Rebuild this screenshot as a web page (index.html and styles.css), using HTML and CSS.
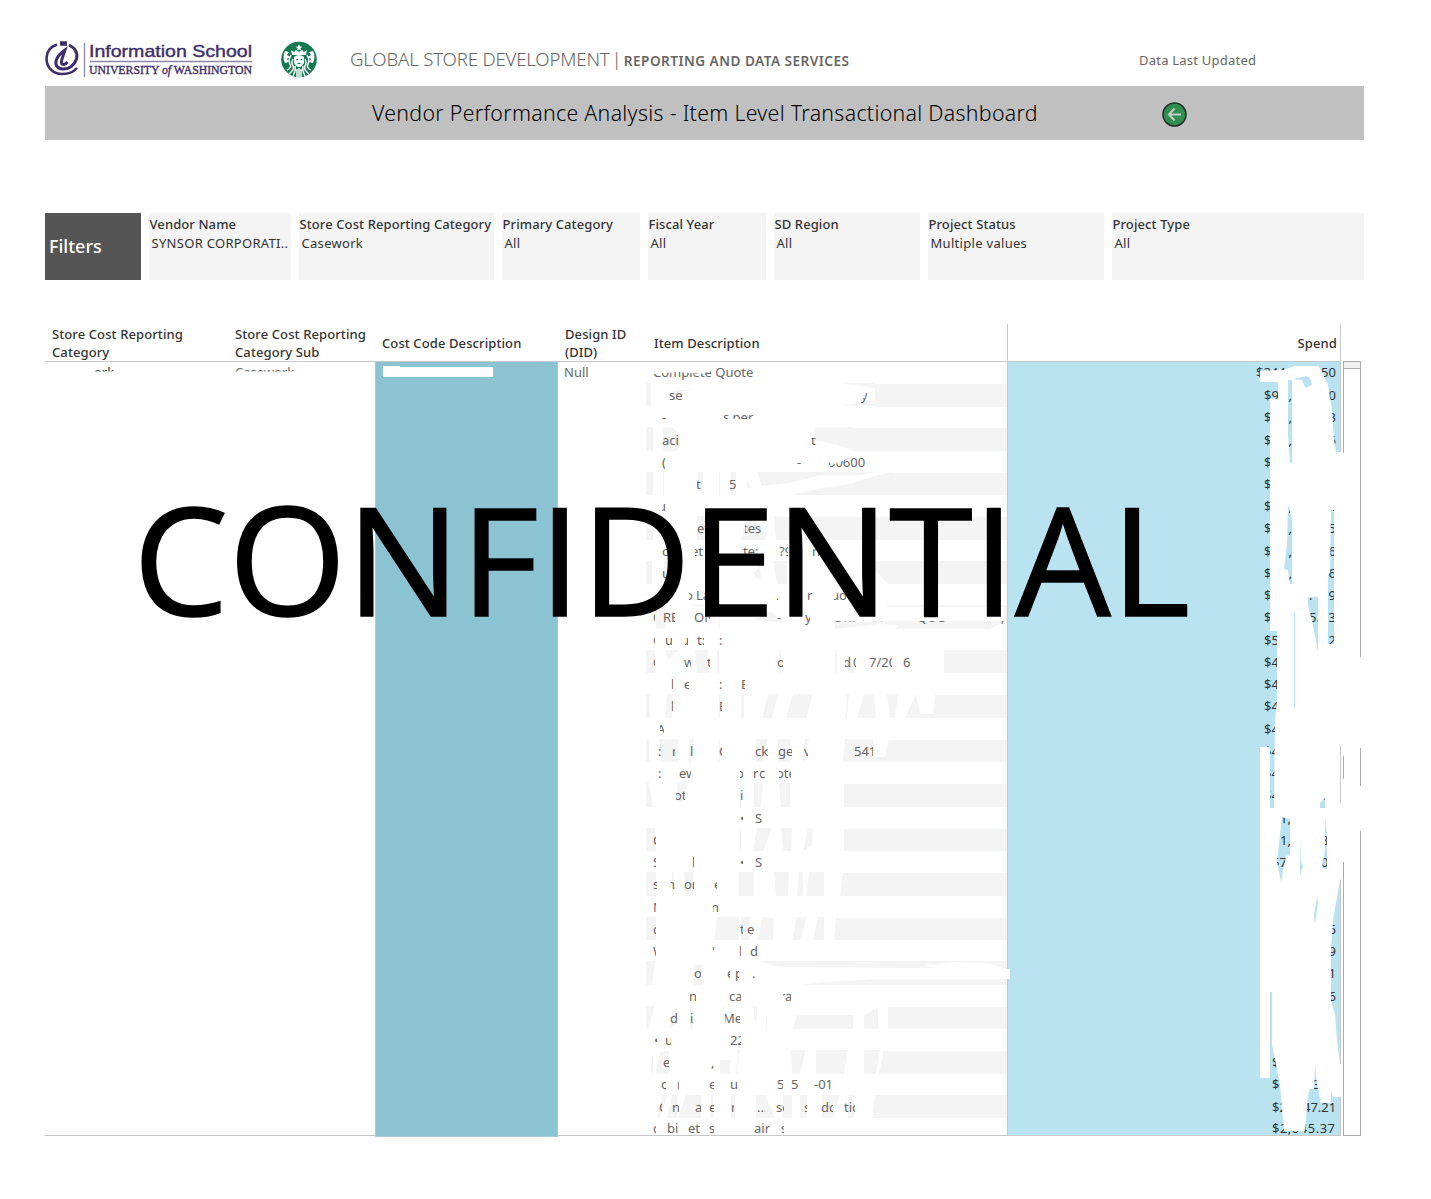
FILE: index.html
```html
<!DOCTYPE html>
<html lang="en">
<head>
<meta charset="utf-8">
<title>Vendor Performance Analysis</title>
<link rel="stylesheet" href="styles.css">
</head>
<body>
<main class="page">
  <header class="top">
    <svg class="ischool" width="208" height="38" viewBox="0 0 208 38">
      <g fill="none" stroke="#3d2f6b">
        <path d="M12 4.500C5 7 1.500 12 1.500 18.500C1.500 27.500 8 34 17 34C23.500 34 29 31.500 32 28" stroke-width="2.600"/>
        <path d="M24 5C30 8 33 13 31.500 19C29.500 25.500 24 29 18.500 29C12 29 9.500 24.500 11.500 19.500C13 15.500 16.500 12.500 20 10C18.500 15 16 20 16.500 23C17 25.500 20.500 24.500 22.500 22" stroke-width="3"/>
        <path d="M15 3.500h7" stroke-width="4.500"/>
        <path d="M39.500 3v34M45 21.500h162" stroke="#8d86aa" stroke-width="1.300"/>
      </g>
      <text class="ischool-name" x="44" y="16.500" textLength="163" lengthAdjust="spacingAndGlyphs">Information School</text>
      <text class="ischool-univ" x="44" y="34" textLength="163" lengthAdjust="spacingAndGlyphs">UNIVERSITY <tspan font-style="italic">of</tspan> WASHINGTON</text>
    </svg>
    <svg class="siren" width="36" height="37" viewBox="0 0 36 37">
      <circle cx="18" cy="18.500" r="17.800" fill="#137a50"/>
      <g fill="#fff">
        <path d="M18 3l1 2.500 2.500.2-2 1.600.6 2.400-2.100-1.300-2.100 1.300.6-2.400-2-1.600 2.500-.2z"/>
        <path d="M10 9l3 2 2-2 3 2 3-2 2 2 3-2-1 5H11z"/>
        <path d="M13 16q5-4 10 0v6q-2 4-5 4t-5-4z"/>
        <path d="M4 10l4 1-2 3 3 2-3 2 2 3-4 1q-3-6 0-12zM32 10l-4 1 2 3-3 2 3 2-2 3 4 1q3-6 0-12z"/>
      </g>
      <g fill="none" stroke="#fff" stroke-width="1.500">
        <path d="M10 14q-3 5-1 9t-3 6M12 18q-2 4 0 7t-4 8M14 25q1 4-2 10M26 14q3 5 1 9t3 6M24 18q2 4 0 7t4 8M22 25q-1 4 2 10M18 27v9M16 28v8M20 28v8"/>
      </g>
      <path d="M15 18.500h2M19.500 18.500h2M16.500 22.500h3" stroke="#137a50"/>
    </svg>
    <div class="dept"><span class="dept-main">GLOBAL STORE DEVELOPMENT</span><span class="bar">|</span><span class="dept-sub">REPORTING AND DATA SERVICES</span></div>
    <div class="updated">Data Last Updated</div>
  </header>

  <section class="title">
    <h1>Vendor Performance Analysis - Item Level Transactional Dashboard</h1>
    <svg class="back" width="26" height="26" viewBox="0 0 26 26">
      <circle cx="12.500" cy="12.500" r="11.500" fill="#2f8f50" stroke="#233128" stroke-width="1.600"/>
      <path d="M19 12.500H7.500M12.500 6.500l-5.500 6 5.500 6" fill="none" stroke="#c4cfc6" stroke-width="2"/>
    </svg>
  </section>

  <section class="filters">
    <div class="filters-label">Filters</div>
    <div class="filter"><b>Vendor Name</b><span>SYNSOR CORPORATI..</span></div>
    <div class="filter"><b>Store Cost Reporting Category</b><span>Casework</span></div>
    <div class="filter"><b>Primary Category</b><span>All</span></div>
    <div class="filter"><b>Fiscal Year</b><span>All</span></div>
    <div class="filter"><b>SD Region</b><span>All</span></div>
    <div class="filter"><b>Project Status</b><span>Multiple values</span></div>
    <div class="filter"><b>Project Type</b><span>All</span></div>
  </section>

  <section class="sheet">
    <div class="head">
      <div>Store Cost Reporting<br>Category</div>
      <div>Store Cost Reporting<br>Category Sub</div>
      <div>Cost Code Description</div>
      <div>Design ID<br>(DID)</div>
      <div>Item Description</div>
      <div class="spend-head">Spend</div>
    </div>
    <div class="body">
      <div class="cell cat"><span>ork</span></div>
      <div class="cell sub"><span>Casework</span></div>
      <div class="cell code"></div>
      <div class="cell did">Null</div>
      <div class="items"></div>
      <div class="spend"></div>
      <div class="scroll"><i></i></div>
    </div>
  </section>
</main>
<svg class="redaction bands" width="1431" height="1199"></svg>
<div class="fragments"></div>
<svg class="redaction" width="1431" height="1199">
  <g fill="#fff">
    <path d="M46 371.500H370V390H46zM383 366h17v1h93v10H383zM653 364H708L712 371L700 374L680 372L653 374z"/>
    <path d="M680 419H760V425H680zM690 428L740 424H815V438H690zM780 465L820 459L835 464L850 458L874 458L880 463V456H800zM790 440V444H812V440zM800 465h30v5h-30zM655 408h14v7h-14zM855 388h10v10h-10z"/>
    <path d="M833 607H1004V621H895L870 622L833 621z"/>
    <path d="M1005 969h5v10h-5z"/>
    <path d="M1336 453h8V756h-3V745h-5zM1342 779h4V862h-4zM1357 657h6V748h-6zM1357 786h6V831h-6z"/>
    <path fill-rule="evenodd" d="M1260 371L1283 370L1295 366H1318L1321 370L1328 385L1332 410L1334 440L1336 452H1342V745H1340V803H1342V878L1340 880L1333 920L1331 950V1000L1335 1015L1337 1040L1340 1064H1342V1097H1333L1331 1092V1103H1321L1317 1085L1315 1065L1314 1089H1310L1308 1095L1305 1131H1284L1280 1085L1272 1044V992H1270V1078H1260V747H1270V808H1274L1275 720L1277 700V631H1270V399H1278V382H1260z
      M1288 380H1292V464L1290 462L1288 435zM1293 379L1306 376L1310 378L1312 385L1305 388L1302 380z
      M1288 504L1292 520V584L1290 584L1288 570L1284 569L1287 545zM1331 510L1334 510V644H1328V575L1330 573z
      M1308 597H1318V652L1312 620L1308 605zM1294 612H1295V708H1294zM1320 803L1325 798V808H1320z
      M1282 817L1290 819V855L1286 856L1281 882L1277 862zM1300 839L1301 862L1303 866L1300 876z
      M1325 818L1327 835V869L1322 868L1325 850zM1317 896L1318 903L1315 924L1314 915z"/>
  </g>
  <text class="stamp" x="133" y="615.500" textLength="1057" lengthAdjust="spacingAndGlyphs">CONFIDENTIAL</text>
</svg>
<script src="rows.js"></script>
</body>
</html>
```
FILE: styles.css
```css
* { box-sizing: border-box; }
body {
  margin: 0;
  width: 1431px;
  height: 1199px;
  position: relative;
  overflow: hidden;
  background: #fff;
  color: #333;
  font: 13px/18px "Noto Sans", sans-serif;
}
.page { padding: 40px 67px 0 45px; }
.top { display: flex; height: 46px; }
.ischool-name { font: 17px "Liberation Sans", sans-serif; fill: #3d2f6b; stroke: #3d2f6b; stroke-width: .4px; }
.ischool-univ { font: 13px "Liberation Serif", serif; fill: #3d2f6b; stroke: #3d2f6b; stroke-width: .4px; }
.siren { margin: 1px 0 0 28px; }
.dept { margin-left: 33px; width: 789px; color: #666; white-space: nowrap; line-height: 38px; }
.dept-main { font-size: 18.600px; font-weight: 300; letter-spacing: -.17px; }
.bar { font-size: 19px; font-weight: 300; margin: 0 2px 0 2px; }
.dept-sub { font-size: 13.600px; font-weight: 600; letter-spacing: .47px; }
.updated { color: #666; line-height: 41px; letter-spacing: .23px; white-space: nowrap; }

.title { height: 54px; background: #c0c0c0; display: flex; align-items: center; }
h1 { margin: 0 0 0 327px; width: 790px; font-size: 21.300px; font-weight: 300; color: #000; white-space: nowrap; letter-spacing: .31px; }
.back { margin-top: 3px; }

.filters {
  margin-top: 73px;
  height: 67px;
  display: grid;
  grid-template-columns: 96px 142px 195px 138px 118px 146px 176px 252px;
  column-gap: 8px;
}
.filters-label { background: #555; color: #fff; font-size: 18px; font-weight: 500; line-height: 66px; padding-left: 4px; }
.filter { background: #f4f4f4; padding: 2px 0 0 .5px; white-space: nowrap; display: flex; flex-direction: column; line-height: 19px; }
.filter b, .head { font-weight: 500; letter-spacing: .1px; }
.filter span { padding-left: 2px; letter-spacing: .3px; }

.sheet { margin-top: 44px; width: 1316px; }
.head, .body { display: grid; grid-template-columns: 183px 147px 183px 89px 360px 334px 20px; }
.head {
  height: 38px;
  width: 1296px;
  align-items: center;
  border-bottom: 1px solid #c8c8c8;
  border-right: 1px solid #c8c8c8;
  white-space: nowrap;
}
.head div { padding-left: 7px; }
.head .spend-head { height: 37px; line-height: 39px; border-left: 1px solid #c8c8c8; text-align: right; padding-right: 4px; }
.body { height: 774px; }
.cell { border-bottom: 1px solid #c8c8c8; padding: 1px 0 0 7px; color: #666; }
.cat { color: #333; padding-left: 49px; }
.code { background: #8bc3d3; border: 1px solid #a9cbd5; border-top: 0; margin-bottom: -1px; }
.did { padding-left: 6px; }
.items { margin-left: -1px; border-bottom: 1px solid #c8c8c8; background: repeating-linear-gradient(#fff 0 21.500px, #f4f4f4 21.500px 44.500px); }
.spend { background: #b9e3f0; border: 1px solid #c8c8c8; border-top: 0; }
.scroll { margin-left: 2px; border: 1px solid #acacac; width: 18px; height: 775px; margin-top: -1px; }
.scroll i { display: block; height: 7px; background: #eee; border-bottom: 1px solid #acacac; }

.redaction, .fragments { position: absolute; left: 0; top: 0; }
.row { position: absolute; left: 0; height: 18px; width: 1431px; }
.row span { position: absolute; top: 0; height: 18px; overflow: hidden; white-space: pre; color: #666; }
.row .money { color: #333; overflow: visible; }
.stamp { font: 150px "Open Sans", sans-serif; fill: #000; stroke: #000; stroke-width: 1.500px; }
```
FILE: rows.js
```js
// Remaining slivers of the zebra stripes left of the clear area, per stripe.
const stripes = [
  [383, 406, 875, "M646 383H651V406H646zM671 391L700 389L681 392V400H673zM841 383L875 388V383z M875 400L841 406H875z"],
  [427, 451, 853, "M646 427H653V451H646zM663 427H672L680 434L679 446L677 451H663zM695 438L718 435L740 430H795L793 431.5L740 432L715 437zM815 427H853V451L843 447L830 443L815 441z"],
  [472, 495, 892, "M646 472H653V495H646zM663 472h1V495h-1zM698 472h5V495L697 486zM719 472h1V495h-1zM731 472h5V495h-5zM747 480L752 488H747zM757 472H875L860 475L822 475L790 483L762 486zM788 495L830 487L850 484L875 476L892 472V495z"],
  [516, 540, 776, "M646 516H653V540H646zM697 516h8V540h-8zM748 516L766 532L766 540H741zM774 516H776V540z"],
  [561, 584, 888, "M646 561h6V584h-6zM664 561h7V584h-7zM754 573L760 566L761 580L756 578zM773 561h14V584h-10zM866 561H888V584z"],
  [605, 629, 1007, "M655 606h10V629h-9zM692 605H708V606H692zM719 616h1V629h-1zM755 620L760 613L772 612L785 623zM835 622L870 622L888 605H1007V620L990 629H896L898 625L880 624L835 629z"],
  [650, 673, 944, "M646 650H655V673H646zM665 650H679L668 660zM690 660H695L690 673zM695 650H708V673H697zM717 650h2V673h-2zM779 650h2V673h-2zM835 650h2V673h-2zM846 661h6L854 673H849z"],
  [694, 718, 935, "M646 694H649L650 718H646zM667 694H672V718H665zM719 694H720V718H719zM741 694h3V718h-3zM768 694H778L772 718H762zM793 694H813L806 718H786zM847 694h2L847 718h-2zM864 694H874L876 718H857zM887 694H898L895 718H905L916 694L920 714H933L935 694V718H890z"],
  [739, 762, 889, "M646 739H649V762H646zM659 739H678V762H662zM689 739h5L691 762h-2zM719 739h1V762h-1zM756 739H768L762 762H756zM778 739H790V762H778zM805 739h4L805 762h-2zM845 739H873L875 757H885L889 739V762H843z"],
  [783, 807, 844, "M646 783H649L653 807H646zM677 783H688L683 802H677zM740 783h1V807h-1zM754 783H763L761 807H754zM779 783H790V807H781z"],
  [828, 851, 844, "M646 828H655L656 851H646zM740 828h1V851h-1zM754 845L757 828H772L763 851H754zM781 828H792L791 851H783zM808 828H813L812 845L803 851z"],
  [872, 896, 843, "M646 872H656V896H646zM672 872h2V896h-2zM684 872h9V896h-7zM739 872H754V896H739zM774 872H789L788 896H776zM799 872H803V896H797zM809 872H824V896H806zM843 872V896H840z"],
  [917, 940, 836, "M646 917H656V940H646zM717 917H739V940H714zM741 917h9V940h-9zM763 917L774 918L773 940H757zM797 917H807L800 940H792zM818 917H824V940H813zM836 917V940H834z"],
  [961, 985, 1007, "M646 961H655L652 985H646zM695 965H702V985H693zM757 961H1007V969L990 964L957 962L925 965L935 968L780 967zM803 985L825 982L880 979H1007V985z"],
  [1006, 1029, 888, "M646 1006H655L648 1029H646zM673 1009H678L676 1024L669 1029zM690 1006h3V1029h-3zM754 1006h3V1020h-3zM766 1016h1V1029h-1zM797 1015H853V1029H793zM864 1015L878 1007V1029H864z"],
  [1050, 1074, 884, "M652 1056H653V1074H651zM660 1053L669 1050L668 1074H655zM720 1060h10V1074h-10zM738 1050h2L737 1074h-1zM791 1050H806L800 1074H792zM816 1050H848L844 1074H816zM864 1050H880L876 1074H864zM884 1050V1074H879z"],
  [1095, 1118, 875, "M662 1095H668L660 1118H657zM672 1095H677V1118H667zM686 1095H701V1118H678zM711 1095h2V1118h-2zM731 1095h4V1118h-4zM756 1095H765L775 1118H756zM783 1095H792V1118H783zM800 1095H807V1118H800zM822 1095h18L833 1118H822zM848 1095h6V1118h-6zM875 1095V1118H872z"]
];
document.querySelector(".bands").innerHTML = stripes.map(([a, b, x, d]) =>
  `<path fill="#fff" d="M646 ${a - 1}H${x}V${b + 1}H646z"/><path fill="#f4f4f4" d="${d}"/>`).join("");

// Legible pieces of item text: left edge, visible width, text, hidden lead-in.
const items = [
  [[653, 110, "Complete Quote"]],
  [[669, 13, "se"], [861, 6, "y"]],
  [[662, 6, "-", 0], [723, 34, "s per", 0]],
  [[662, 18, "aci"], [811, 5, "t", 0]],
  [[662, 3, "(", 0], [797, 6, "-"], [829, 43, "00600", 1]],
  [[697, 5, "t", 1], [729, 8, "5"]],
  [[662, 4, "u", 4]],
  [[697, 14, "ete"], [745, 17, "tes", 2]],
  [[662, 9, "on"], [695, 9, "et", 4], [743, 18, "te:"], [779, 9, "?9"], [812, 10, "n"]],
  [[662, 10, "u"], [706, 3, "."]],
  [[689, 4, "o", 4], [696, 14, "La"], [776, 2, "."], [807, 6, "r"], [834, 14, "uo", 3]],
  [[653, 2, "C"], [663, 12, "RE"], [694, 16, "ON"], [777, 5, "-"], [805, 5, "y"], [833, 60, "ORI  AST"], [917, 28, "QUO"], [1001, 3, ","]],
  [[653, 2, "Q"], [665, 7, "u"], [685, 3, "u", 4], [697, 7, "t:"], [719, 3, ":"]],
  [[653, 2, "C"], [684, 7, "w"], [707, 3, "t"], [777, 6, "o"], [845, 6, "d", 2], [853, 3, "0"], [869, 23, "7/20"], [903, 9, "6"]],
  [[671, 2, "l"], [684, 5, "e"], [719, 3, ":"], [741, 4, "E"]],
  [[671, 2, "l"], [719, 3, "E"]],
  [[660, 4, "A", 3]],
  [[658, 4, ":"], [672, 3, "r"], [690, 3, "l"], [719, 3, "C"], [755, 14, "ck"], [778, 14, "ge"], [804, 4, "v"], [854, 19, "541"]],
  [[658, 3, ":"], [679, 12, "ew"], [740, 3, "o", 4], [753, 5, "r"], [759, 6, "c"], [779, 12, "ote", 3]],
  [[676, 9, "ot", 2], [740, 3, "i"]],
  [[740, 3, "•"], [755, 8, "S"]],
  [[653, 3, "C"]],
  [[653, 3, "S"], [692, 2, "l"], [740, 3, "•"], [755, 9, "S"]],
  [[653, 4, "s"], [671, 4, "n", 4], [684, 10, "or"], [714, 3, "e"]],
  [[653, 3, "N"], [713, 6, "ne", 2]],
  [[653, 3, "c"], [740, 3, "t"], [747, 7, "e"]],
  [[653, 3, "W"], [712, 4, "'"], [739, 2, "l"], [750, 8, "d"]],
  [[694, 7, "o"], [727, 3, "e"], [735, 4, "p"], [752, 3, "."]],
  [[689, 7, "n"], [729, 12, "ca"], [783, 8, "ra", 3]],
  [[670, 8, "d"], [690, 3, "i"], [725, 15, "Me", 2]],
  [[654, 3, "•"], [665, 6, "u"], [730, 11, "22"]],
  [[663, 6, "e"], [711, 3, ","]],
  [[661, 5, "o"], [677, 2, "r"], [709, 5, "e"], [730, 8, "uo"], [777, 6, "5"], [791, 8, "5"], [814, 21, "-01"]],
  [[659, 3, "C"], [672, 7, "n"], [695, 6, "at"], [709, 5, "e"], [731, 3, "r"], [757, 8, "..."], [776, 8, "se"], [804, 3, "s"], [821, 12, "dd"], [844, 11, "tion"]],
  [[653, 3, "c"], [667, 11, "bi"], [688, 13, "et"], [709, 5, "s"], [754, 16, "air"], [781, 3, "s"]]
];
const dollar = [1264, "$"], comma = [1288.500, ","];
const last = d => [1328.500, d];
const spend = [
  [[1256, "$244"], [1321, "50"]], [[1264, "$9"], comma, last("0")],
  [dollar, comma, last("3")], [dollar, comma, last("6")], [dollar], [dollar],
  [dollar, comma, last("4")], [dollar, comma, last("5")], [dollar, comma, last("6")],
  [dollar, comma, last("6")], [dollar, [1309, "."], last("9")], [dollar, [1309, "5."], last("3")],
  [[1264, "$5"], last("2")], [[1264, "$4"]], [[1264, "$4"]], [[1264, "$4"]], [[1264, "$4"]],
  [[1264, "$4"]], [[1264, "$4"]], [[1264, "$4"], [1322, "."]], [[1280, "1,"]],
  [[1280, "1,"], [1321, "8"]], [[1272, "$7"], [1321, "0"]], [], [],
  [last("6")], [last("9")], [last("1")], [last("6")], [], [],
  [[1272, "$"]], [[1272, "$"], [1313, "3."]], [[1272, "$2"], [1303, "47.21"]], [[1272, "$2,045.37"]]
];
document.querySelector(".fragments").innerHTML = items.map((row, n) =>
  `<div class="row" style="top:${n ? Math.min(1119, Math.round(363.8 + n * 22.24)) : 363}px">` +
  row.map(([x, w, t, lead = 0]) => `<span style="left:${x}px;width:${w}px;text-indent:${-lead}px">${t}</span>`).join("") +
  spend[n].map(([x, t]) => `<span class="money" style="left:${x}px;letter-spacing:${t.length > 6 ? .5 : 0}px">${t}</span>`).join("") +
  `</div>`).join("");
```
